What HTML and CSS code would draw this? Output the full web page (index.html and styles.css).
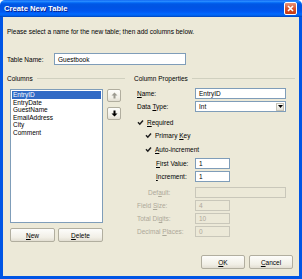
FILE: index.html
```html
<!DOCTYPE html>
<html>
<head>
    <title>Create New Table</title>
    <link rel="stylesheet" href="styles.css">
</head>
<body>
    <div class="window">
        <div class="titlebar">
            <span class="title">Create New Table</span>
            <div class="close-btn">
                <svg width="11" height="11" viewBox="0 0 11 11"><path d="M3 3 L8 8 M8 3 L3 8" stroke="#fff" stroke-width="1.6"/></svg>
            </div>
        </div>
        <div class="client">
            <div class="intro">Please select a name for the new table; then add columns below.</div>

            <div class="table-name">
                <label>Table Name:</label>
                <div class="field name-field">Guestbook</div>
            </div>

            <div class="panes">
                <div class="pane columns-pane">
                    <div class="heading">Columns</div>
                    <div class="list-row">
                        <div class="listbox">
                            <div class="item selected">EntryID</div>
                            <div class="item">EntryDate</div>
                            <div class="item">GuestName</div>
                            <div class="item">EmailAddress</div>
                            <div class="item">City</div>
                            <div class="item">Comment</div>
                        </div>
                        <div class="move-buttons">
                            <div class="btn small-btn">
                                <svg width="7" height="7" viewBox="0 0 7 7"><path d="M3.5 0.5 L6.5 3.5 H4.5 V6.5 H2.5 V3.5 H0.5 Z" fill="#9c9a90"/></svg>
                            </div>
                            <div class="btn small-btn">
                                <svg width="7" height="7" viewBox="0 0 7 7"><path d="M3.5 6.5 L6.5 3.5 H4.5 V0.5 H2.5 V3.5 H0.5 Z" fill="#000"/></svg>
                            </div>
                        </div>
                    </div>
                    <div class="list-buttons">
                        <div class="btn"><u>N</u>ew</div>
                        <div class="btn"><u>D</u>elete</div>
                    </div>
                </div>

                <div class="pane props-pane">
                    <div class="heading">Column Properties</div>

                    <div class="row first-row">
                        <label><u>N</u>ame:</label>
                        <div class="field wide">EntryID</div>
                    </div>
                    <div class="row">
                        <label>Data <u>T</u>ype:</label>
                        <div class="field wide select">
                            <span>Int</span>
                            <div class="drop">
                                <svg width="5" height="3" viewBox="0 0 5 3"><path d="M0 0 H5 L2.5 3 Z" fill="#000"/></svg>
                            </div>
                        </div>
                    </div>
                    <div class="row check-row gap5">
                        <span class="check"><svg width="7" height="7" viewBox="0 0 7 7"><path d="M1 3.3 L2.8 5.2 L6 1.6" stroke="#1f1f1f" stroke-width="1.5" fill="none"/></svg></span>
                        <span><u>R</u>equired</span>
                    </div>
                    <div class="row check-row indent1">
                        <span class="check"><svg width="7" height="7" viewBox="0 0 7 7"><path d="M1 3.3 L2.8 5.2 L6 1.6" stroke="#1f1f1f" stroke-width="1.5" fill="none"/></svg></span>
                        <span>Primary <u>K</u>ey</span>
                    </div>
                    <div class="row check-row indent1 gap3">
                        <span class="check"><svg width="7" height="7" viewBox="0 0 7 7"><path d="M1 3.3 L2.8 5.2 L6 1.6" stroke="#1f1f1f" stroke-width="1.5" fill="none"/></svg></span>
                        <span><u>A</u>uto-increment</span>
                    </div>
                    <div class="row gap3">
                        <label class="indent2"><u>F</u>irst Value:</label>
                        <div class="field short">1</div>
                    </div>
                    <div class="row">
                        <label class="indent2"><u>I</u>ncrement:</label>
                        <div class="field short">1</div>
                    </div>
                    <div class="row gap5 disabled">
                        <label class="indent1">Def<u>a</u>ult:</label>
                        <div class="field wide"></div>
                    </div>
                    <div class="row disabled">
                        <label>Field <u>S</u>ize:</label>
                        <div class="field short">4</div>
                    </div>
                    <div class="row disabled">
                        <label>Total Di<u>g</u>its:</label>
                        <div class="field short">10</div>
                    </div>
                    <div class="row disabled">
                        <label>Decimal <u>P</u>laces:</label>
                        <div class="field short">0</div>
                    </div>
                </div>
            </div>

            <div class="footer">
                <div class="btn"><u>O</u>K</div>
                <div class="btn"><u>C</u>ancel</div>
            </div>
        </div>
    </div>
</body>
</html>
```

FILE: styles.css
```css
body {
    margin: 0;
    font-family: "Liberation Sans", Arial, sans-serif;
    font-size: 6.5px;
    color: #000;
}

.window {
    width: 302px;
    height: 279px;
    display: flex;
    flex-direction: column;
}

.titlebar {
    height: 17px;
    display: flex;
    align-items: center;
    justify-content: space-between;
    padding: 0 5px 0 4px;
    border-radius: 5px 5px 0 0;
    background: linear-gradient(to bottom, #0058ee 0%, #3593ff 6%, #127dff 12%, #0262ee 18%, #0057e5 26%, #0054e3 40%, #0055eb 60%, #005bf5 72%, #026afe 82%, #0062ef 90%, #0052d6 96%, #0040ab 100%);
}

.title {
    color: #fff;
    font-weight: bold;
    font-size: 7.7px;
    text-shadow: 1px 1px 0 #0a1e8c;
}

.close-btn {
    width: 11px;
    height: 11px;
    border: 1px solid #fff;
    border-radius: 2px;
    background: linear-gradient(to bottom, #e8957a, #d9532c 50%, #c53a14);
    display: flex;
}

.client {
    flex: 1;
    background-color: #ece9d8;
    border: 3px solid #0055e5;
    border-top: none;
    padding: 11px 4px 0 4px;
}

.intro {
    line-height: 8px;
}

.table-name {
    display: flex;
    align-items: center;
    margin-top: 17px;
    height: 12px;
}

.table-name label {
    width: 47px;
}

.field {
    height: 11px;
    box-sizing: border-box;
    border: 1px solid #7f9db9;
    background-color: #fff;
    padding-left: 3px;
    display: flex;
    align-items: center;
}

.name-field {
    width: 132px;
    height: 12px;
}

.panes {
    display: flex;
    gap: 9px;
    margin-top: 9px;
}

.columns-pane {
    width: 118px;
}

.props-pane {
    width: 161px;
}

.heading {
    height: 9px;
    display: flex;
    align-items: center;
    gap: 4px;
    color: #000;
}

.heading::after {
    content: "";
    flex: 1;
    border-top: 1px solid #d0d0bf;
}

.list-row {
    display: flex;
    gap: 4px;
    margin-top: 6px;
    padding-left: 3px;
}

.listbox {
    width: 93px;
    height: 134px;
    box-sizing: border-box;
    border: 1px solid #7f9db9;
    background-color: #fff;
    padding: 1px;
}

.item {
    height: 7.6px;
    line-height: 7.6px;
    padding-left: 1px;
}

.item.selected {
    background-color: #316ac5;
    color: #fff;
}

.move-buttons {
    display: flex;
    flex-direction: column;
    gap: 5px;
}

.btn {
    box-sizing: border-box;
    height: 14px;
    border: 1px solid #b1ae9f;
    border-radius: 2px;
    background: linear-gradient(to bottom, #fdfdfb, #f1efe6 70%, #e2ded2);
    display: flex;
    align-items: center;
    justify-content: center;
}

.btn.small-btn {
    width: 14px;
    height: 13px;
}

.list-buttons {
    display: flex;
    gap: 3px;
    margin-top: 5px;
    padding-left: 3px;
}

.list-buttons .btn {
    width: 45px;
}

.row {
    display: flex;
    align-items: center;
    height: 11px;
    margin-top: 2px;
    padding-left: 3px;
}

.row label {
    width: 58px;
    box-sizing: border-box;
}

.row.first-row {
    margin-top: 5px;
}

.row.gap3 {
    margin-top: 3px;
}

.row.gap5 {
    margin-top: 5px;
}

.indent1 {
    padding-left: 11px;
}

.row label.indent1 {
    padding-left: 11px;
}

.row label.indent2 {
    padding-left: 19px;
}

.field.wide {
    width: 91px;
}

.field.short {
    width: 35px;
}

.select {
    justify-content: space-between;
    padding-right: 1px;
}

.drop {
    width: 8px;
    height: 8px;
    box-sizing: border-box;
    border: 1px solid #c5c2b5;
    background: linear-gradient(to bottom, #fbfbf8, #e4e2d8);
    display: flex;
    align-items: center;
    justify-content: center;
}

.check {
    width: 7px;
    height: 7px;
    margin-right: 3px;
    display: flex;
}

.disabled {
    color: #aca899;
}

.disabled .field {
    background-color: #ece9d8;
    border-color: #c9c7ba;
}

.footer {
    display: flex;
    justify-content: flex-end;
    gap: 4px;
    margin-top: 13px;
    padding-right: 2px;
}

.footer .btn {
    width: 44px;
}
```
